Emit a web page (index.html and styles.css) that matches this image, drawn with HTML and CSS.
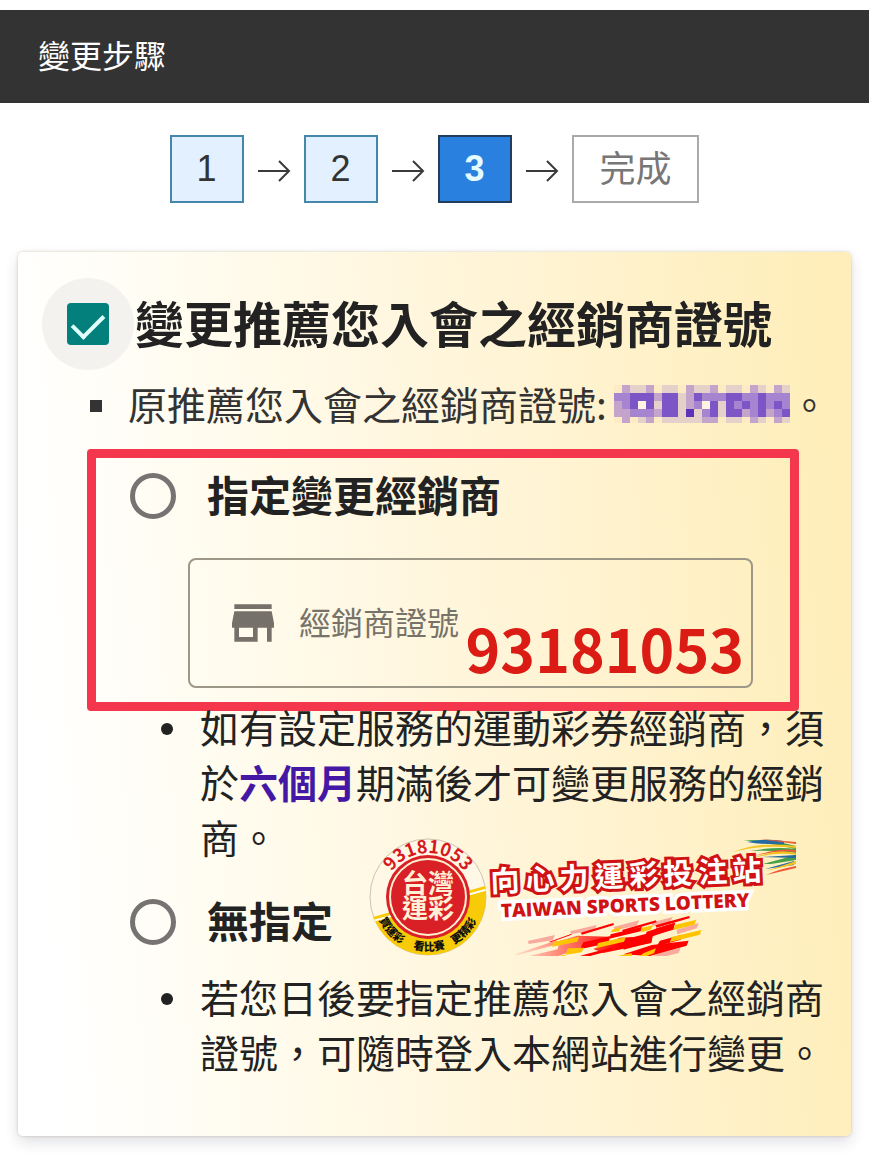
FILE: index.html
```html
<!DOCTYPE html>
<html lang="zh-Hant">
<head>
<meta charset="utf-8">
<meta name="viewport" content="width=device-width, initial-scale=1">
<title>變更步驟</title>
<link rel="stylesheet" href="styles.css">
</head>
<body>
<header class="bar"><h1 class="bar-title">變更步驟</h1></header>
<main>
  <ol class="steps">
    <li class="step">1</li>
    <li class="arrow" aria-hidden="true"><svg viewBox="0 0 34 24"><path d="M1 12H32M22 2L32 12L22 22"/></svg></li>
    <li class="step">2</li>
    <li class="arrow" aria-hidden="true"><svg viewBox="0 0 34 24"><path d="M1 12H32M22 2L32 12L22 22"/></svg></li>
    <li class="step step-current" aria-current="step">3</li>
    <li class="arrow" aria-hidden="true"><svg viewBox="0 0 34 24"><path d="M1 12H32M22 2L32 12L22 22"/></svg></li>
    <li class="step step-done">完成</li>
  </ol>

  <form class="card">
    <div class="title-row">
      <span class="halo"><input class="check" type="checkbox" id="change" checked></span>
      <label class="title" for="change">變更推薦您入會之經銷商證號</label>
    </div>
    <ul class="origin">
      <li class="origin-item">
        <span>原推薦您入會之經銷商證號:</span>
        <svg class="mosaic" viewBox="0 0 22 19" preserveAspectRatio="none" shape-rendering="crispEdges" aria-hidden="true">
          <rect class="m-a" width="22" height="19"/>
          <path class="m-0" d="M0 0h1v4H0zM5 0h1v4H5zM8 0h1v4H8zM13 0h1v4h-1zM16 0h1v4h-1zM19 0h1v4h-1zM0 16h1v3H0zM2 16h1v3H2zM5 16h1v3H5zM13 16h1v3h-1zM16 16h1v3h-1zM19 16h1v3h-1z"/>
          <path class="m-b" d="M1 0h1v4H1zM4 0h1v4H4zM9 0h1v4H9zM12 0h1v4h-1zM17 0h1v4h-1zM20 0h1v4h-1zM5 4h1v4H5zM9 4h1v8H9zM0 8h1v8H0zM1 12h1v7H1zM5 12h1v4H5zM4 16h1v3H4zM11 16h2v3h-2zM16 12h1v4h-1zM17 16h1v3h-1zM19 12h1v4h-1zM20 16h1v3h-1z"/>
          <path class="m-c" d="M0 4h2v4H0zM1 8h1v4H1zM2 12h3v4H2zM11 4h3v4h-3zM10 8h1v4h-1zM11 12h1v4h-1zM16 4h2v4h-2zM15 8h1v4h-1zM17 8h1v8h-1zM19 4h3v4h-3zM19 8h1v4h-1zM20 12h1v4h-1zM21 8h1v4h-1z"/>
          <path class="m-d" d="M2 4h3v4H2zM2 8h1v4H2zM4 8h1v4H4zM6 4h2v12H6zM10 4h1v4h-1zM12 8h1v8h-1zM14 4h1v12h-1zM15 4h1v4h-1zM15 12h1v4h-1zM16 8h1v4h-1zM18 4h1v12h-1zM20 8h1v4h-1zM21 12h1v4h-1z"/>
          <path class="m-e" d="M9 12h1v4H9z"/>
          <path class="m-w" d="M3 8h1v4H3zM11 8h1v4h-1z"/>
        </svg>
        <span class="stop">。</span>
      </li>
    </ul>

    <section class="option option-marked">
      <div class="option-row">
        <input class="radio" type="radio" name="dealer" id="assign">
        <label class="option-label" for="assign">指定變更經銷商</label>
      </div>
      <div class="field">
        <svg class="store" viewBox="0 0 24 24" aria-hidden="true"><path d="M20 4H4v2h16V4zm1 10v-2l-1-5H4l-1 5v2h1v6h10v-6h4v6h2v-6h1zm-9 4H6v-4h6v4z"/></svg>
        <input class="field-input" type="text" aria-label="經銷商證號" placeholder="經銷商證號">
        <span class="number">93181053</span>
      </div>
    </section>
    <ul class="notes">
      <li>如有設定服務的運動彩券經銷商，須於<strong>六個月</strong>期滿後才可變更服務的經銷商。</li>
    </ul>

    <section class="option option-none">
      <div class="option-row">
        <input class="radio" type="radio" name="dealer" id="none">
        <label class="option-label" for="none">無指定</label>
      </div>
    </section>
    <ul class="notes notes-last">
      <li>若您日後要指定推薦您入會之經銷商證號，可隨時登入本網站進行變更。</li>
    </ul>

    <svg class="logo" viewBox="0 0 428 120" role="img" aria-label="台灣運彩 向心力運彩投注站">
      <defs>
        <clipPath id="disc"><circle cx="59" cy="59" r="58"/></clipPath>
        <clipPath id="streaks"><rect x="0" y="0" width="660" height="153"/></clipPath>
        <path id="arc-top" d="M14 60a45 45 0 0 1 90 0"/>
        <path id="arc-bottom" d="M5 59a54 54 0 0 0 108 0"/>
        <linearGradient id="fade" x1="0" x2="1"><stop offset="0" stop-color="#f22" stop-opacity=".1"/><stop offset=".6" stop-color="#f00"/></linearGradient>
      </defs>
      <circle class="disc" cx="59" cy="59" r="58"/>
      <g clip-path="url(#disc)">
        <path fill="#f7cb08" d="M0 80L120 47V120H0z"/>
        <path stroke="#fff" stroke-width="2" d="M0 84L120 51"/>
      </g>
      <circle cx="59" cy="59" r="42" fill="#da2027"/>
      <circle cx="59" cy="59" r="38" fill="none" stroke="#fff0cf" stroke-width="2"/>
      <text class="arc-number" text-anchor="middle"><textPath href="#arc-top" startOffset="50%">93181053</textPath></text>
      <text class="brand" x="59" y="55">台灣</text>
      <text class="brand" x="59" y="80">運彩</text>
      <text class="arc-words"><textPath href="#arc-bottom" startOffset="14%">買運彩</textPath></text>
      <text class="arc-words"><textPath href="#arc-bottom" startOffset="41%">看比賽</textPath></text>
      <text class="arc-words"><textPath href="#arc-bottom" startOffset="66%">更精彩</textPath></text>

      <g>
        <path fill="#46a04a" d="M374 2Q402 1 427 8V11Q402 5 374 2zM381 13Q408 8 427 11V15Q402 12 381 13zM394 26L427 17V22L402 26z"/>
        <path fill="#256aa0" d="M378 4Q396 0 415 3V6Q396 7 378 4zM393 19L427 17V20zM396 31L425 23V27z"/>
        <path fill="#ec5a38" d="M390 1L427 4V6zM386 18Q408 10 427 12V14Q408 12 386 18zM397 37Q410 31 427 28V30z"/>
        <path fill="#f3c421" d="M364 14Q391 3 427 8V10Q391 6 364 14zM382 21Q407 10 427 15V17Q407 13 382 21zM397 33L427 23V26z"/>
      </g>

      <g transform="translate(121 67) scale(.3333)" clip-path="url(#streaks)">
        <path fill="#f7aa9d" d="M114 108L195 90L188 106L116 117zM240 79L320 60L314 76L244 87zM370 66L448 46L440 62L376 76zM480 54L548 36L540 52L490 62zM500 148L572 128L566 144L530 153H490zM560 74L627 54L620 70L562 88z"/>
        <path fill="#f00" d="M176 111L245 86V89L182 112zM272 83L370 54L372 60L276 89zM396 75L498 46L500 52L400 82zM496 61L597 33L600 39L500 68zM270 152L368 127L366 136L300 153z"/>
        <path fill="url(#fade)" d="M76 148L200 106L202 118L80 151zM118 153L235 125L230 144L205 153zM210 107L262 92L358 95L352 113L200 142zM310 132L390 98L488 93L484 114L340 144zM400 148L486 120L596 107L590 122L480 153zM440 108L500 70L555 53L550 72L482 96z"/>
        <path fill="#f00" d="M280 112L360 94L356 114L270 133zM420 99L490 81L484 112L400 134zM362 88L456 65L452 79L358 101zM470 80L555 53L550 74L464 98zM510 107L576 89L572 104L500 124z"/>
        <path fill="#ffc400" d="M190 111L267 95L262 110L186 125zM325 114L408 96L402 110L318 130zM234 130L282 128L275 142L205 153H225zM367 74L393 65L388 79L362 82zM456 68L490 61L482 74L452 82zM555 60L619 44L613 59L550 75zM545 96L634 75L630 89L540 111zM460 145L498 130L492 145L470 153H450zM384 153L425 144V153z"/>
      </g>

      <g transform="rotate(-2.5 122 54)">
        <text class="shop" x="122 157 191 226 261 295 330 364" y="54" aria-hidden="true">向心力運彩投注站</text>
        <text class="english" x="131" y="80">TAIWAN SPORTS LOTTERY</text>
      </g>
    </svg>
  </form>
</main>
</body>
</html>
```
FILE: styles.css
```css
* { box-sizing: border-box; }

body {
  margin: 0;
  padding-top: 10px;
  background: #fff;
  color: #222;
  font-family: "Noto Sans CJK TC", sans-serif;
  font-size: 39px;
  line-height: 55px;
}

ul, ol { margin: 0; padding: 0; list-style: none; }

.bar {
  display: flex;
  align-items: center;
  min-height: 93px;
  padding: 0 38px 4px;
  background: #333;
}

.bar-title {
  margin: 0;
  color: #fff;
  font-size: 32px;
  font-weight: 400;
}

.steps {
  display: flex;
  justify-content: center;
  align-items: stretch;
  padding: 32px 18px 0;
}

.step {
  display: flex;
  align-items: center;
  justify-content: center;
  min-width: 74px;
  height: 68px;
  padding-right: 2px;
  border: 2px solid #4587ab;
  background: #e2f0ff;
  color: #333;
  font: 36px/64px "Liberation Sans", "Noto Sans CJK TC", sans-serif;
}

.step-current {
  border-color: #233e5c;
  background: #2a80df;
  color: #e4fbff;
  font-weight: 700;
}

.step-done {
  padding: 2px 25px 0;
  border-color: #aaa;
  background: #fff;
  color: #777;
}

.arrow {
  display: flex;
  align-items: center;
  justify-content: center;
  width: 60px;
  padding-top: 4px;
}

.arrow svg {
  width: 34px;
  height: 24px;
  fill: none;
  stroke: #3a3a3a;
  stroke-width: 2;
}

.card {
  position: relative;
  margin: 49px 18px 21px;
  padding: 26px 22px 57px;
  border-radius: 5px;
  background: linear-gradient(86deg, #fff 5%, #fffcf0 25%, #fff5da 55%, #ffeeb9 98%);
  box-shadow: 0 6px 14px rgba(60, 50, 80, 0.16), 0 0 3px rgba(130, 100, 30, 0.3);
}

.title-row { display: flex; align-items: center; gap: 1px; padding-left: 2px; }

.halo {
  display: flex;
  align-items: center;
  justify-content: center;
  flex: none;
  width: 92px;
  height: 92px;
  border-radius: 50%;
  background: #f3f2ef;
}

.check {
  display: flex;
  justify-content: center;
  width: 42px;
  height: 42px;
  margin: 0;
  border-radius: 4px;
  background: #03807b;
  appearance: none;
}

.check:checked::after {
  content: "";
  width: 14px;
  height: 27px;
  margin-top: 4px;
  border: solid #e0fffa;
  border-width: 0 4px 4px 0;
  transform: rotate(45deg);
}

.title { padding-bottom: 4px; font-size: 49px; font-weight: 700; line-height: 70px; }

.origin { padding: 6px 0 0 50px; }

.origin-item { display: flex; align-items: center; color: #333; white-space: nowrap; }

.origin-item::before {
  content: "";
  flex: none;
  width: 12px;
  height: 12px;
  margin: 4px 26px 0 0;
  background: #333;
}

.mosaic { flex: none; width: 176px; height: 38px; margin-left: 7px; }
.m-0 { fill: #fcebc3; }
.m-a { fill: #e5d0ca; }
.m-b { fill: #c4a4cb; }
.m-c { fill: #a684cf; }
.m-d { fill: #7d55c6; }
.m-e { fill: #5c32b8; }
.m-w { fill: #fff4df; }

.option { padding-left: 90px; }

.option-marked { position: relative; padding-top: 37px; }

.option-marked::after {
  content: "";
  position: absolute;
  inset: 18px 30px -23px 47px;
  border: 9px solid #f5374e;
  border-radius: 4px;
  pointer-events: none;
}

.option-row { display: flex; align-items: center; gap: 31px; }

.radio {
  flex: none;
  width: 46px;
  height: 46px;
  margin: 0;
  border: 5px solid #757472;
  border-radius: 50%;
  appearance: none;
}

.option-label {
  height: 55px;
  font-size: 42px;
  font-weight: 700;
  line-height: 51px;
}

.field {
  position: relative;
  display: flex;
  align-items: center;
  gap: 18px;
  height: 130px;
  margin: 35px 76px 0 58px;
  padding: 0 35px;
  border: 2px solid #9d9787;
  border-radius: 8px;
}

.store { flex: none; width: 56px; height: 56px; fill: #75716a; }

.field-input {
  flex: 1;
  min-width: 0;
  padding: 0 0 4px;
  border: 0;
  outline: 0;
  background: none;
  font: 32px/48px "Noto Sans CJK TC", sans-serif;
}

.field-input::placeholder { color: #77736a; opacity: 1; }

.number {
  position: absolute;
  right: 7px;
  bottom: -2px;
  color: #db1c15;
  font-size: 59px;
  font-weight: 700;
  line-height: 80px;
}

.notes { padding: 11px 0 0 160px; }

.notes li { position: relative; }

.notes li::before {
  content: "";
  position: absolute;
  top: 24px;
  left: -39px;
  width: 12px;
  height: 12px;
  border-radius: 50%;
  background: #222;
}

.notes strong { color: #4517a5; font-weight: 700; }

.option-none { padding-top: 30px; }

.notes-last { padding-top: 20px; }

.logo {
  position: absolute;
  top: 586px;
  left: 351px;
  width: 428px;
  height: 120px;
}

.disc { fill: #fff8e6; stroke: #ccc4ae; stroke-width: 1; }
.arc-number { fill: #d7191f; font-size: 18px; font-weight: 700; }
.brand { fill: #fff0d6; font-size: 26px; font-weight: 700; text-anchor: middle; }
.arc-words { fill: #111; font-size: 11px; font-weight: 900; }

.shop {
  fill: #fff;
  stroke: #d01214;
  stroke-width: 6px;
  paint-order: stroke;
  font-size: 29px;
  font-weight: 700;
}

.english {
  fill: #d01214;
  stroke: #fff;
  stroke-width: 7px;
  paint-order: stroke;
  font-family: "Open Sans", sans-serif;
  font-size: 19px;
  font-weight: 800;
}
```
